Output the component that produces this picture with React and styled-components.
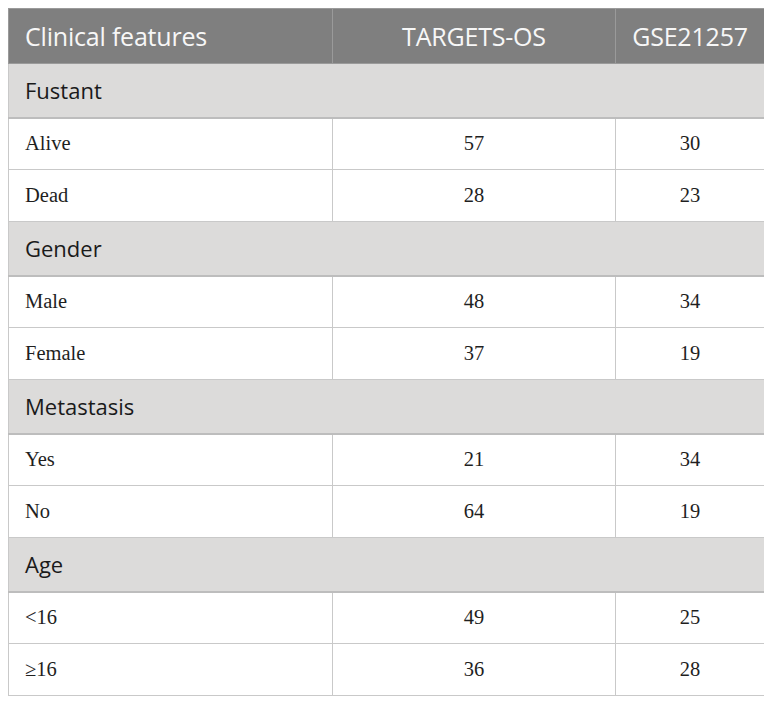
import React from 'react';
import styled, { createGlobalStyle } from 'styled-components';

const GlobalStyle = createGlobalStyle`
  body {
    margin: 8px;
    background: #ffffff;
  }
`;

const Table = styled.table`
  width: 756px;
  border-collapse: collapse;
  table-layout: fixed;
  border: 1px solid #c9c9c9;
`;

const HeadCell = styled.th`
  height: 55px;
  padding: 0 16px;
  box-sizing: border-box;
  background: #7f7f7f;
  color: #f7f7f7;
  font-family: "Open Sans", "Noto Sans", sans-serif;
  font-size: 25px;
  font-weight: 400;
  letter-spacing: -0.2px;
  text-align: ${p => (p.$left ? 'left' : 'center')};
  border: 1px solid #9a9a9a;
`;

const SectionCell = styled.td`
  height: 54px;
  padding: 0 16px;
  box-sizing: border-box;
  background: #dcdbda;
  color: #1a1a1a;
  font-family: "Open Sans", "Noto Sans", sans-serif;
  font-size: 22px;
  border-bottom: 2px solid #bdbdbd;
`;

const Cell = styled.td`
  height: 52px;
  padding: 0 16px;
  box-sizing: border-box;
  color: #1f1f1f;
  font-family: "Liberation Serif", serif;
  font-size: 20.5px;
  text-align: ${p => (p.$left ? 'left' : 'center')};
  border: 1px solid #c9c9c9;
`;

const groups = [
  { title: 'Fustant', rows: [['Alive', 57, 30], ['Dead', 28, 23]] },
  { title: 'Gender', rows: [['Male', 48, 34], ['Female', 37, 19]] },
  { title: 'Metastasis', rows: [['Yes', 21, 34], ['No', 64, 19]] },
  { title: 'Age', rows: [['<16', 49, 25], ['≥16', 36, 28]] },
];

export default function App() {
  return (
    <>
      <GlobalStyle />
      <Table>
        <colgroup>
          <col style={{ width: 324 }} />
          <col style={{ width: 283 }} />
          <col style={{ width: 149 }} />
        </colgroup>
        <thead>
          <tr>
            <HeadCell $left>Clinical features</HeadCell>
            <HeadCell>TARGETS-OS</HeadCell>
            <HeadCell>GSE21257</HeadCell>
          </tr>
        </thead>
        <tbody>
          {groups.map(g => (
            <React.Fragment key={g.title}>
              <tr>
                <SectionCell colSpan={3}>{g.title}</SectionCell>
              </tr>
              {g.rows.map(r => (
                <tr key={r[0]}>
                  <Cell $left>{r[0]}</Cell>
                  <Cell>{r[1]}</Cell>
                  <Cell>{r[2]}</Cell>
                </tr>
              ))}
            </React.Fragment>
          ))}
        </tbody>
      </Table>
    </>
  );
}
